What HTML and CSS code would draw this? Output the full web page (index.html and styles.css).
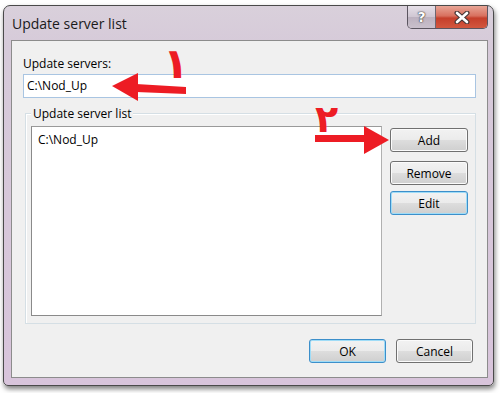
FILE: index.html
```html
<!DOCTYPE html>
<html>
<head>
<meta charset="utf-8">
<title>Update server list</title>
<link rel="stylesheet" href="styles.css">
</head>
<body>
<div class="window">
  <div class="titlebar">
    <span class="title">Update server list</span>
    <div class="caps">
      <div class="cap help">?</div>
      <div class="cap close">
        <svg width="16" height="13" viewBox="0 0 16 13">
          <path d="M3 2 L13 11 M13 2 L3 11" stroke="#4a3a3a" stroke-width="5" stroke-linecap="round" fill="none"/>
          <path d="M3 2 L13 11 M13 2 L3 11" stroke="#ffffff" stroke-width="2.6" stroke-linecap="round" fill="none"/>
        </svg>
      </div>
    </div>
  </div>
  <div class="client">
    <div class="lbl">Update servers:</div>
    <div class="input">C:\Nod_Up</div>
    <div class="group">
      <span class="legend">Update server list</span>
      <div class="gbody">
        <div class="list"><div class="item">C:\Nod_Up</div></div>
        <div class="side">
          <button class="btn">Add</button>
          <button class="btn remove">Remove</button>
          <button class="btn focus edit">Edit</button>
        </div>
      </div>
    </div>
    <div class="footer">
      <button class="btn focus">OK</button>
      <button class="btn">Cancel</button>
    </div>
  </div>
</div>
<svg class="arrows" width="500" height="393" viewBox="0 0 500 393">
  <polygon points="112,86 138,73 138,101" fill="#ed1c24"/>
  <polygon points="136,84 186,87 186,94 136,92" fill="#ed1c24"/>
  <polygon points="364,126 389,140 364,154" fill="#ed1c24"/>
  <rect x="315" y="135" width="51" height="7" fill="#ed1c24"/>
</svg>
<span class="num n1">١</span>
<span class="num n2">٢</span>
</body>
</html>
```

FILE: styles.css
```css
* { box-sizing: border-box; }
html, body { margin: 0; padding: 0; }
body {
  width: 500px;
  height: 393px;
  overflow: hidden;
  position: relative;
  background: #ffffff;
  font-family: "Open Sans", "Noto Sans", sans-serif;
  font-size: 12px;
  color: #000;
}
.window {
  width: 491px;
  height: 381px;
  margin: 5px 0 0 3px;
  border: 1px solid #4a4a4a;
  border-radius: 7px 7px 5px 5px;
  background: linear-gradient(#d9d0db 0px, #d6cad9 40px, #d8c4db 100%);
  padding: 0 5px 7px 7px;
  display: flex;
  flex-direction: column;
  box-shadow: 1px 3px 5px rgba(0, 0, 0, 0.5);
}
.titlebar {
  height: 34px;
  display: flex;
  justify-content: space-between;
  align-items: flex-start;
}
.title {
  padding: 9px 0 0 1px;
  font-size: 14px;
  line-height: 18px;
  color: #1a1a1a;
}
.caps {
  display: flex;
  height: 23px;
  border: 1px solid #5b5560;
  border-top: none;
  border-radius: 0 0 5px 5px;
  overflow: hidden;
}
.cap {
  display: flex;
  align-items: center;
  justify-content: center;
}
.help {
  width: 28px;
  border-right: 1px solid #6e6670;
  background: linear-gradient(#e6e0e8, #cfc6d2 50%, #bcb1bf 51%, #c9c0cc);
  color: #fff;
  font-family: "DejaVu Sans", sans-serif;
  font-weight: bold;
  font-size: 14px;
  text-shadow: 0 0 1px #444, 0 0 1px #444, 0 0 2px #555;
}
.close {
  width: 51px;
  background: linear-gradient(#e8a596, #d8705e 45%, #c53f2b 55%, #d2573f);
}
.client {
  flex: 1;
  border: 1px solid #8c8c8c;
  background: #f0f0f0;
  padding: 15px 11px 14px 11px;
  display: flex;
  flex-direction: column;
}
.lbl { line-height: 15px; }
.input {
  margin-top: 3px;
  height: 24px;
  border: 1px solid #a9c5e2;
  background: #fff;
  padding: 0 3px;
  line-height: 22px;
}
.group {
  flex: 1;
  margin: 15px 0 0 2px;
  border: 1px solid #d5dfe5;
  box-shadow: inset 1px 1px 0 #ffffff;
  padding: 0 7px 7px 5px;
  display: flex;
  flex-direction: column;
}
.legend {
  align-self: flex-start;
  margin-top: -8px;
  padding: 0 2px;
  background: #f0f0f0;
  line-height: 15px;
}
.gbody {
  flex: 1;
  display: flex;
  gap: 8px;
  margin-top: 5px;
}
.list {
  flex: 1;
  background: #fff;
  border: 1px solid #8a8a8a;
  border-right-color: #b0b0b0;
  border-top-color: #9a9a9a;
  padding: 5px 6px;
}
.item { line-height: 15px; }
.side {
  width: 78px;
  display: flex;
  flex-direction: column;
  padding-top: 2px;
}
.remove { margin-top: 9px; }
.edit { margin-top: 6px; }
.btn {
  width: 78px;
  height: 24px;
  padding: 0;
  border: 1px solid #707070;
  border-radius: 3px;
  background: linear-gradient(#f2f2f2 0%, #ebebeb 50%, #dddddd 51%, #cfcfcf 100%);
  box-shadow: inset 0 0 0 1px #fbfbfb;
  font: inherit;
  color: #000;
}
.btn.focus {
  border-color: #3c8fca;
  box-shadow: inset 0 0 0 1px #9fdcf7;
}
.footer {
  display: flex;
  justify-content: flex-end;
  gap: 10px;
  margin-top: 15px;
  padding-right: 3px;
}
.footer .btn { width: 77px; }
.arrows {
  position: absolute;
  left: 0;
  top: 0;
  pointer-events: none;
}
.num {
  position: absolute;
  color: #ed1c24;
  font-family: "DejaVu Sans", sans-serif;
  font-weight: bold;
  line-height: 1;
}
.n1 { left: 163px; top: 43px; font-size: 42px; }
.n2 { left: 315px; top: 100px; font-size: 38px; }
```
